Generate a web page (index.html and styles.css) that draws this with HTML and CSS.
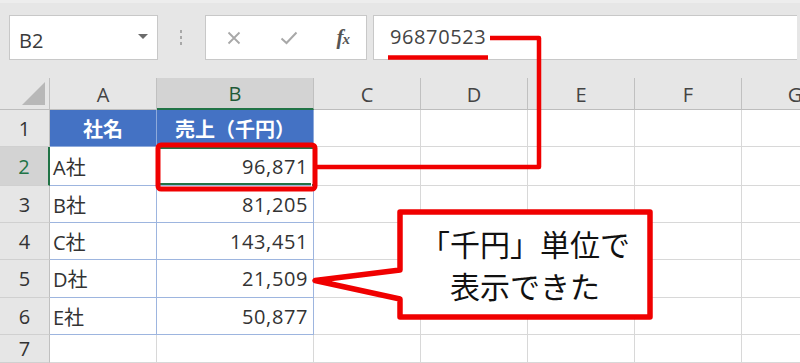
FILE: index.html
```html
<!DOCTYPE html>
<html lang="ja">
<head>
<meta charset="utf-8">
<link rel="stylesheet" href="styles.css">
</head>
<body>
<div class="page">
  <div class="toolbar">
    <div class="namebox"><span class="nb-text">B2</span><span class="nb-arrow"></span></div>
    <div class="grip"><i></i><i></i><i></i></div>
    <div class="buttons">
      <svg class="btn-icon" width="14" height="14" viewBox="0 0 14 14"><path d="M1.5 1.5 L12.5 12.5 M12.5 1.5 L1.5 12.5" stroke="#a8a8a8" stroke-width="1.8" fill="none"/></svg>
      <svg class="btn-icon" width="18" height="14" viewBox="0 0 18 14"><path d="M1.5 7.5 L6.5 12 L16.5 1.5" stroke="#a8a8a8" stroke-width="2" fill="none"/></svg>
      <span class="fx"><span class="fx-f">f</span><span class="fx-x">x</span></span>
    </div>
    <div class="formula">96870523</div>
  </div>
  <div class="sheet">
    <div class="hd corner"><span class="tri"></span></div>
    <div class="hd col">A</div>
    <div class="hd col sel">B</div>
    <div class="hd col">C</div>
    <div class="hd col">D</div>
    <div class="hd col">E</div>
    <div class="hd col">F</div>
    <div class="hd col">G</div>

    <div class="hd row">1</div>
    <div class="c th">社名</div>
    <div class="c th">売上（千円）</div>
    <div class="c"></div><div class="c"></div><div class="c"></div><div class="c"></div><div class="c"></div>

    <div class="hd row rsel">2</div>
    <div class="c t">A社</div>
    <div class="c t n active">96,871<span class="handle"></span></div>
    <div class="c"></div><div class="c"></div><div class="c"></div><div class="c"></div><div class="c"></div>

    <div class="hd row">3</div>
    <div class="c t">B社</div>
    <div class="c t n">81,205</div>
    <div class="c"></div><div class="c"></div><div class="c"></div><div class="c"></div><div class="c"></div>

    <div class="hd row">4</div>
    <div class="c t">C社</div>
    <div class="c t n">143,451</div>
    <div class="c"></div><div class="c"></div><div class="c"></div><div class="c"></div><div class="c"></div>

    <div class="hd row">5</div>
    <div class="c t">D社</div>
    <div class="c t n">21,509</div>
    <div class="c"></div><div class="c"></div><div class="c"></div><div class="c"></div><div class="c"></div>

    <div class="hd row">6</div>
    <div class="c t">E社</div>
    <div class="c t n">50,877</div>
    <div class="c"></div><div class="c"></div><div class="c"></div><div class="c"></div><div class="c"></div>

    <div class="hd row">7</div>
    <div class="c"></div>
    <div class="c"></div>
    <div class="c"></div><div class="c"></div><div class="c"></div><div class="c"></div><div class="c"></div>
  </div>

  <svg class="annot" width="800" height="363" viewBox="0 0 800 363">
    <path d="M388 57.5 H488" stroke="#f00000" stroke-width="4.5" fill="none"/>
    <path d="M317 167 H539 V38 H490" stroke="#f00000" stroke-width="4.5" fill="none" stroke-linejoin="round"/>
    <rect x="158" y="145" width="157" height="44" rx="3" ry="3" stroke="#f00000" stroke-width="5" fill="none"/>
    <path d="M400 212 H650 V317 H400 V299 L315 280.5 L400 270 Z" stroke="#f00000" stroke-width="5.5" fill="#ffffff" stroke-linejoin="round"/>
  </svg>
  <div class="callout">「千円」単位で<br>表示できた</div>
</div>
</body>
</html>
```

FILE: styles.css
```css
* { box-sizing: border-box; }
html, body { margin: 0; padding: 0; }
body {
  width: 800px;
  height: 363px;
  overflow: hidden;
  background: #ffffff;
  font-family: "Open Sans", "Noto Sans CJK JP", sans-serif;
}
.page {
  position: relative;
  width: 800px;
  height: 363px;
  overflow: hidden;
}
.toolbar {
  height: 78px;
  background: #e6e6e6;
  border-top: 3px solid #ededed;
  display: flex;
  padding: 12px 3px 18px 9px;
  align-items: stretch;
}
.namebox {
  width: 149px;
  background: #fff;
  border: 1px solid #c8c8c8;
  display: flex;
  align-items: center;
  justify-content: space-between;
  padding: 0 9px 0 9px;
}
.nb-text {
  font-size: 20px;
  color: #3a3a3a;
  margin-top: 5px;
}
.nb-arrow {
  width: 0; height: 0;
  border-left: 5px solid transparent;
  border-right: 5px solid transparent;
  border-top: 5px solid #6b6b6b;
  margin-top: -2px;
}
.grip {
  width: 47px;
  display: flex;
  flex-direction: column;
  align-items: center;
  justify-content: center;
  gap: 3px;
  padding-right: 2px;
}
.grip i {
  display: block;
  width: 2px;
  height: 3px;
  background: #a8a8a8;
}
.buttons {
  width: 162px;
  background: #fff;
  border: 1px solid #c8c8c8;
  display: flex;
  align-items: center;
  padding: 0 17px 0 21px;
  justify-content: space-between;
}
.fx {
  font-family: "Liberation Serif", serif;
  font-style: italic;
  font-weight: bold;
  color: #555;
  font-size: 21px;
  letter-spacing: -1px;
}
.fx-x { font-size: 15px; }
.formula {
  flex: 1;
  margin-left: 6px;
  background: #fff;
  border: 1px solid #c8c8c8;
  border-right: none;
  font-size: 20px;
  letter-spacing: 0.6px;
  color: #444;
  display: flex;
  align-items: center;
  padding-left: 16px;
  padding-bottom: 3px;
}
.sheet {
  display: grid;
  grid-template-columns: 50px 107px 157px 107px 107px 107px 107px 107px;
  grid-template-rows: 32px 37px 39px 37px 37px 38px 37px 28px;
  width: 849px;
}
.hd {
  background: #e6e6e6;
  color: #444;
  font-size: 20px;
  display: flex;
  align-items: center;
  justify-content: center;
}
.hd.col {
  border-right: 1px solid #c0c0c0;
  border-bottom: 1px solid #bdbdbd;
  padding-top: 1px;
}
.hd.col.sel {
  background: #d3d3d3;
  border-bottom: 2px solid #217346;
  color: #1f5a37;
}
.corner {
  position: relative;
  border-right: 1px solid #c0c0c0;
  border-bottom: 1px solid #bdbdbd;
}
.tri {
  position: absolute;
  right: 4px;
  bottom: 4px;
  width: 0; height: 0;
  border-left: 23px solid transparent;
  border-bottom: 23px solid #b8b8b8;
}
.hd.row {
  border-right: 1px solid #c0c0c0;
  border-bottom: 1px solid #d0d0d0;
  color: #333;
}
.hd.row.rsel {
  background: #d3d3d3;
  border-right: 2px solid #217346;
  color: #217346;
}
.c {
  border-right: 1px solid #d8d8d8;
  border-bottom: 1px solid #d8d8d8;
  background: #fff;
  font-size: 20px;
  color: #333;
  display: flex;
  align-items: center;
  position: relative;
}
.c.th {
  background: #4472c4;
  color: #fff;
  font-weight: bold;
  font-size: 20px;
  font-family: "Noto Sans CJK JP", sans-serif;
  justify-content: center;
  border-right: 1px solid #8eaadb;
  border-bottom: 1px solid #8eaadb;
}
.c.t {
  border-right: 1px solid #9db5df;
  border-bottom: 1px solid #9db5df;
  padding-left: 3px;
}
.c.n {
  justify-content: flex-end;
  padding-right: 5px;
  padding-left: 0;
  letter-spacing: 0.6px;
}
.c.active {
  box-shadow: inset 0 2px 0 #217346, inset 0 -2px 0 #217346;
}
.handle {
  position: absolute;
  right: -3px;
  bottom: -3px;
  width: 5px;
  height: 5px;
  background: #217346;
  border: 1px solid #fff;
}
.annot {
  position: absolute;
  left: 0;
  top: 0;
  pointer-events: none;
}
.callout {
  position: absolute;
  left: 402px;
  top: 222px;
  width: 246px;
  text-align: center;
  font-family: "Noto Sans CJK JP", sans-serif;
  font-size: 30px;
  line-height: 42px;
  color: #111;
}
```
